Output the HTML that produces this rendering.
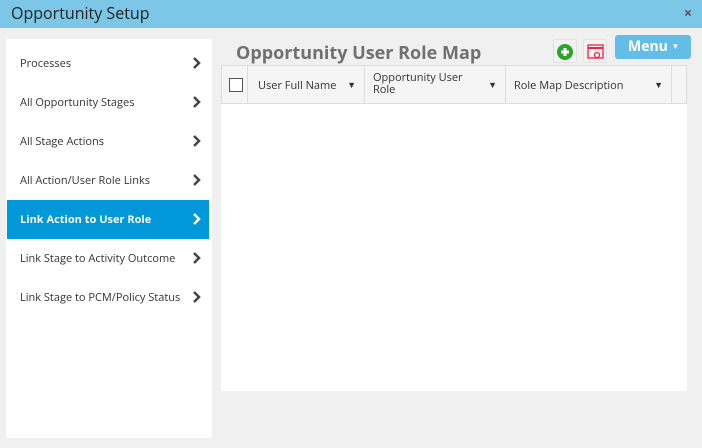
<!DOCTYPE html>
<html><head><style>
*{margin:0;padding:0;box-sizing:border-box}
body{width:702px;height:448px;background:#f0f0f0;font-family:"Open Sans","Liberation Sans",sans-serif;position:relative;overflow:hidden}
.top{position:absolute;left:0;top:0;width:702px;height:28px;background:#7cc6e8;color:#222;font-size:16px;line-height:27px;padding-left:11px}
.x{position:absolute;right:10px;top:0;font-size:14px;color:#555;font-weight:bold}
.side{position:absolute;left:6px;top:39px;width:206px;height:399px;background:#fff;padding-top:5px}
.it{position:relative;height:39px;font-size:11px;color:#333;line-height:39px;padding-left:13px;margin-right:3px;margin-left:1px}
.it.a{background:#0098d8;color:#fff;font-weight:bold}
.it svg{position:absolute;right:8px;top:13px}
h1{position:absolute;left:236px;top:41px;font-size:18px;font-weight:bold;color:#707070}
.grid{position:absolute;left:221px;top:65px;width:466px;height:326px;background:#fff}
.hd{height:39px;background:#f5f5f5;border:1px solid #ddd;position:relative;font-size:11px;color:#333}
.c{position:absolute;top:0;height:38px;border-right:1px solid #ddd}
.menu{position:absolute;left:615px;top:35px;width:76px;height:24px;background:#64bde6;border-radius:3px;color:#fff;font-size:14px;font-weight:bold;line-height:24px;padding-left:13px}
.ib{position:absolute;top:39px;width:24px;height:24px;background:#f2f2f2;border:1px solid #e2e2e2;border-radius:2px}
</style></head><body>
<div class="top">Opportunity Setup<span class="x">×</span></div>
<div class="side">
<div class="it">Processes<svg width="8" height="12"><path d="M1 1l5 5-5 5" stroke="#444" stroke-width="2.5" fill="none"/></svg></div>
<div class="it">All Opportunity Stages<svg width="8" height="12"><path d="M1 1l5 5-5 5" stroke="#444" stroke-width="2.5" fill="none"/></svg></div>
<div class="it">All Stage Actions<svg width="8" height="12"><path d="M1 1l5 5-5 5" stroke="#444" stroke-width="2.5" fill="none"/></svg></div>
<div class="it">All Action/User Role Links<svg width="8" height="12"><path d="M1 1l5 5-5 5" stroke="#444" stroke-width="2.5" fill="none"/></svg></div>
<div class="it a">Link Action to User Role<svg width="8" height="12"><path d="M1 1l5 5-5 5" stroke="#fff" stroke-width="2.5" fill="none"/></svg></div>
<div class="it">Link Stage to Activity Outcome<svg width="8" height="12"><path d="M1 1l5 5-5 5" stroke="#444" stroke-width="2.5" fill="none"/></svg></div>
<div class="it">Link Stage to PCM/Policy Status<svg width="8" height="12"><path d="M1 1l5 5-5 5" stroke="#444" stroke-width="2.5" fill="none"/></svg></div>
</div>
<h1>Opportunity User Role Map</h1>
<div class="ib" style="left:553px"><svg width="22" height="22"><circle cx="11" cy="12" r="8" fill="#2aa52a"/><path d="M11 8v8M7 12h8" stroke="#fff" stroke-width="3"/></svg></div>
<div class="ib" style="left:583px"><svg width="22" height="22"><rect x="4" y="5" width="15" height="13" fill="none" stroke="#e24" stroke-width="1.3"/><path d="M4 8h15" stroke="#e24" stroke-width="2"/><circle cx="13" cy="15" r="2.5" fill="#fff" stroke="#e24" stroke-width="1.3"/></svg></div>
<div class="menu">Menu <span style="font-size:8px;vertical-align:2px">▼</span></div>
<div class="grid"><div class="hd">
<div class="c" style="left:0;width:26px"><div style="position:absolute;left:7px;top:12px;width:14px;height:14px;border:1px solid #555;background:#fff"></div></div>
<div class="c" style="left:26px;width:117px"><span style="position:absolute;left:10px;top:12px">User Full Name</span><span style="position:absolute;right:8px;top:12px;font-size:9px">▼</span></div>
<div class="c" style="left:143px;width:141px"><span style="position:absolute;left:8px;top:6px;line-height:12px">Opportunity User<br>Role</span><span style="position:absolute;right:8px;top:12px;font-size:9px">▼</span></div>
<div class="c" style="left:284px;width:166px"><span style="position:absolute;left:8px;top:12px">Role Map Description</span><span style="position:absolute;right:8px;top:12px;font-size:9px">▼</span></div>
</div></div>
</body></html>
